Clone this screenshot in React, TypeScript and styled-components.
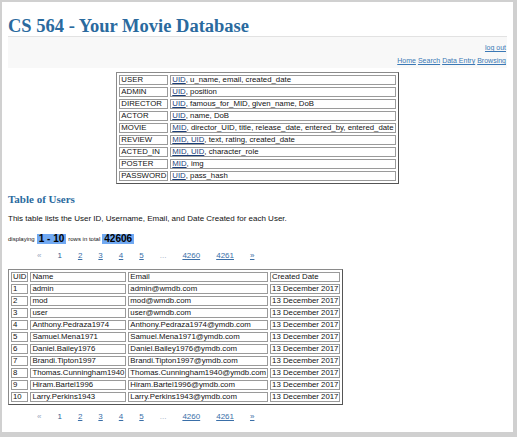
import React from "react";
import styled, { createGlobalStyle } from "styled-components";

const Global = createGlobalStyle`
  html, body { margin: 0; padding: 0; background: #d0d0d0; }
  body { font-family: "Liberation Sans", Arial, sans-serif; }
`;

const Page = styled.div`
  background: #fff;
  margin: 2px 4px 0 2px;
  padding: 0 6px;
  height: 430px;
  box-sizing: border-box;
  overflow: hidden;
`;

const Title = styled.h1`
  margin: 0;
  padding-top: 15px;
  font-family: "Liberation Serif", Georgia, serif;
  font-weight: bold;
  font-size: 18.5px;
  line-height: 19px;
  color: #2a6a9e;
  border-bottom: 1px solid #e2e2e2;
`;

const NavBar = styled.div`
  background: #f8f8f8;
  height: 31px;
  display: flex;
  flex-direction: column;
  align-items: flex-end;
  padding: 7px 1px 0 0;
  box-sizing: border-box;
  gap: 5px;
  font-size: 7px;
  line-height: 8px;
`;

const NavRow = styled.div`
  display: flex;
  gap: 2px;
`;

const NavLink = styled.a`
  color: #3a78b5;
  text-decoration: underline;
`;

const SchemaTable = styled.table`
  margin: 4px auto 0;
  border-collapse: separate;
  border-spacing: 2px;
  border: 1px solid #8a8a8a;
  border-right-color: #555;
  border-bottom-color: #555;
  font-size: 7.8px;
  color: #111;
`;

const Td = styled.td`
  border: 1px solid #9a9a9a;
  padding: 0 1px;
  line-height: 8px;
  height: 8px;
  white-space: nowrap;
`;

const Key = styled.span`
  color: #1c3f7a;
  text-decoration: underline;
`;

const SectionTitle = styled.h2`
  margin: 9px 0 0;
  font-family: "Liberation Serif", Georgia, serif;
  font-weight: bold;
  font-size: 11px;
  line-height: 12px;
  color: #2a6a9e;
`;

const Para = styled.p`
  margin: 9px 0 0;
  font-size: 8px;
  line-height: 9px;
  color: #111;
`;

const Displaying = styled.div`
  margin-top: 11px;
  display: flex;
  align-items: center;
  gap: 2px;
  font-size: 6px;
  color: #111;
`;

const Badge = styled.span`
  background: #71a9f2;
  color: #000;
  font-weight: bold;
  font-size: 10px;
  line-height: 10px;
  padding: 0 2px;
`;

const Pager = styled.div`
  display: flex;
  gap: 16px;
  padding-left: 29px;
  margin-top: 7px;
  font-size: 8px;
  line-height: 9px;
`;

const PageItem = styled.span<{ $link?: boolean; $muted?: boolean }>`
  color: ${(p) => (p.$muted ? "#9aa9c0" : p.$link ? "#3a6fa8" : "#2c5c90")};
  text-decoration: ${(p) => (p.$link ? "underline" : "none")};
`;

const UsersTable = styled(SchemaTable)`
  margin: 9px 0 0;
`;

const schema: [string, string, string][] = [
  ["USER", "UID", ", u_name, email, created_date"],
  ["ADMIN", "UID", ", position"],
  ["DIRECTOR", "UID", ", famous_for_MID, given_name, DoB"],
  ["ACTOR", "UID", ", name, DoB"],
  ["MOVIE", "MID", ", director_UID, title, release_date, entered_by, entered_date"],
  ["REVIEW", "MID, UID", ", text, rating, created_date"],
  ["ACTED_IN", "MID, UID", ", character_role"],
  ["POSTER", "MID", ", img"],
  ["PASSWORD", "UID", ", pass_hash"],
];

const users: [string, string, string][] = [
  ["1", "admin", "admin@wmdb.com"],
  ["2", "mod", "mod@wmdb.com"],
  ["3", "user", "user@wmdb.com"],
  ["4", "Anthony.Pedraza1974", "Anthony.Pedraza1974@ymdb.com"],
  ["5", "Samuel.Mena1971", "Samuel.Mena1971@ymdb.com"],
  ["6", "Daniel.Bailey1976", "Daniel.Bailey1976@ymdb.com"],
  ["7", "Brandi.Tipton1997", "Brandi.Tipton1997@ymdb.com"],
  ["8", "Thomas.Cunningham1940", "Thomas.Cunningham1940@ymdb.com"],
  ["9", "Hiram.Bartel1996", "Hiram.Bartel1996@ymdb.com"],
  ["10", "Larry.Perkins1943", "Larry.Perkins1943@ymdb.com"],
];

function Pagination() {
  return (
    <Pager>
      <PageItem $muted>«</PageItem>
      <PageItem>1</PageItem>
      <PageItem $link>2</PageItem>
      <PageItem $link>3</PageItem>
      <PageItem $link>4</PageItem>
      <PageItem $link>5</PageItem>
      <PageItem $muted>...</PageItem>
      <PageItem $link>4260</PageItem>
      <PageItem $link>4261</PageItem>
      <PageItem $link>»</PageItem>
    </Pager>
  );
}

export default function App() {
  return (
    <>
      <Global />
      <Page>
        <Title>CS 564 - Your Movie Database</Title>
        <NavBar>
          <NavRow>
            <NavLink>log out</NavLink>
          </NavRow>
          <NavRow>
            <NavLink>Home</NavLink>
            <NavLink>Search</NavLink>
            <NavLink>Data Entry</NavLink>
            <NavLink>Browsing</NavLink>
          </NavRow>
        </NavBar>
        <SchemaTable>
          <tbody>
            {schema.map(([name, key, rest]) => (
              <tr key={name}>
                <Td>{name}</Td>
                <Td>
                  <Key>{key}</Key>
                  {rest}
                </Td>
              </tr>
            ))}
          </tbody>
        </SchemaTable>
        <SectionTitle>Table of Users</SectionTitle>
        <Para>This table lists the User ID, Username, Email, and Date Created for each User.</Para>
        <Displaying>
          displaying <Badge>1 - 10</Badge> rows in total <Badge>42606</Badge>
        </Displaying>
        <Pagination />
        <UsersTable>
          <tbody>
            <tr>
              <Td>UID</Td>
              <Td>Name</Td>
              <Td>Email</Td>
              <Td>Created Date</Td>
            </tr>
            {users.map(([id, name, email]) => (
              <tr key={id}>
                <Td>{id}</Td>
                <Td>{name}</Td>
                <Td>{email}</Td>
                <Td>13 December 2017</Td>
              </tr>
            ))}
          </tbody>
        </UsersTable>
        <Pagination />
      </Page>
    </>
  );
}
